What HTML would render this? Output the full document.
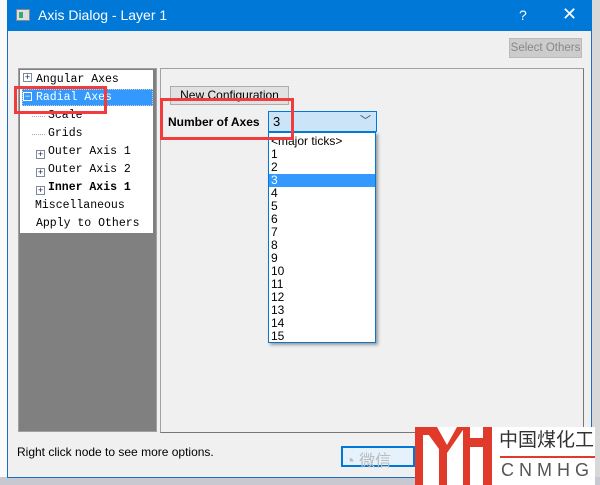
<!DOCTYPE html>
<html><head><meta charset="utf-8"><style>
*{margin:0;padding:0;box-sizing:border-box}
body{width:600px;height:485px;overflow:hidden;background:#fff;position:relative;font-family:"Liberation Sans",sans-serif;font-size:12px}
.a{position:absolute}
.mono{font-family:"Liberation Mono","DejaVu Sans Mono",monospace;font-size:11.5px;white-space:nowrap}
.lst div{height:13px;line-height:13px;padding-left:2px;font-size:12px}
</style></head><body>
<div class="a" style="left:0;top:0;width:7px;height:485px;background:#fafafa"></div>
<div class="a" style="left:591px;top:0;width:9px;height:485px;background:#d8d8d8"></div>
<div class="a" style="left:0;top:477px;width:600px;height:8px;background:#c8c8d0"></div>
<div class="a" style="left:7px;top:0;width:585px;height:478px;background:#f0f0f0;border:1px solid #1a6fc4"></div>
<div class="a" style="left:7px;top:0;width:585px;height:31px;background:#0078d7"></div>
<div class="a" style="left:16px;top:9px;width:14px;height:12px;background:#ddd;border:1px solid #888"><div style="margin:2px;width:4px;height:6px;background:#3a7"></div></div>
<div class="a" style="left:38px;top:7px;color:#fff;font-size:14px">Axis Dialog - Layer 1</div>
<div class="a" style="left:519px;top:7px;color:#fff;font-size:14px">?</div>
<div class="a" style="left:562px;top:4px;color:#fff;font-size:18px">✕</div>
<div class="a" style="left:509px;top:38px;width:73px;height:20px;background:#ccc;border:1px solid #bbb;color:#888;font-size:11.5px;text-align:center;line-height:18px;white-space:nowrap;overflow:hidden">Select Others</div>
<div class="a" style="left:18px;top:68px;width:139px;height:364px;border:1px solid #a0a0a0;background:#808080"></div>
<div class="a" style="left:20px;top:70px;width:133px;height:163px;background:#fff"></div>
<div class="a" style="left:22px;top:89px;width:131px;height:17px;background:#3399ff;border:1px dotted #ccc"></div>
<div class="a" style="left:23px;top:73px;width:9px;height:9px;border:1px solid #7a8aa0;font-size:9px;line-height:7px;text-align:center;color:#224">+</div>
<div class="a" style="left:23px;top:92px;width:9px;height:9px;border:1px solid #fff;font-size:9px;line-height:7px;text-align:center;color:#fff">−</div>
<div class="a mono" style="left:36px;top:73px">Angular Axes</div>
<div class="a mono" style="left:36px;top:91px;color:#fff">Radial Axes</div>
<div class="a mono" style="left:48px;top:109px">Scale</div>
<div class="a mono" style="left:48px;top:127px">Grids</div>
<div class="a mono" style="left:48px;top:145px">Outer Axis 1</div>
<div class="a mono" style="left:48px;top:163px">Outer Axis 2</div>
<div class="a mono" style="left:48px;top:181px;font-weight:bold">Inner Axis 1</div>
<div class="a mono" style="left:35px;top:199px">Miscellaneous</div>
<div class="a mono" style="left:36px;top:217px">Apply to Others</div>
<div class="a" style="left:36px;top:150px;width:9px;height:9px;border:1px solid #7a8aa0;background:#fff;font-size:9px;line-height:7px;text-align:center;color:#224">+</div>
<div class="a" style="left:36px;top:168px;width:9px;height:9px;border:1px solid #7a8aa0;background:#fff;font-size:9px;line-height:7px;text-align:center;color:#224">+</div>
<div class="a" style="left:36px;top:186px;width:9px;height:9px;border:1px solid #7a8aa0;background:#fff;font-size:9px;line-height:7px;text-align:center;color:#224">+</div>
<div class="a" style="left:32px;top:116px;width:13px;border-top:1px dotted #aaa"></div>
<div class="a" style="left:32px;top:134px;width:13px;border-top:1px dotted #aaa"></div>
<div class="a" style="left:160px;top:68px;width:424px;height:365px;border:1px solid #a0a0a0;border-right-color:#777;border-bottom-color:#777"></div>
<div class="a" style="left:170px;top:86px;width:119px;height:19px;background:#e1e1e1;border:1px solid #adadad;text-align:center;line-height:17px">New Configuration</div>
<div class="a" style="left:168px;top:115px;font-weight:bold;font-size:12px">Number of Axes</div>
<div class="a" style="left:268px;top:111px;width:109px;height:21px;background:#cce4f7;border:1px solid #0078d7;padding-left:4px;line-height:19px;font-size:13px">3<span style="position:absolute;right:5px;top:0;font-size:11px;color:#444">﹀</span></div>
<div class="a lst" style="left:268px;top:132px;width:108px;height:211px;background:#fff;border:1px solid #0078d7;box-shadow:2px 2px 3px #999;padding-top:2px">
<div>&lt;major ticks&gt;</div><div>1</div><div>2</div><div style="background:#3399ff;color:#fff">3</div><div>4</div><div>5</div><div>6</div><div>7</div><div>8</div><div>9</div><div>10</div><div>11</div><div>12</div><div>13</div><div>14</div><div>15</div>
</div>
<div class="a" style="left:14px;top:86px;width:93px;height:28px;border:3px solid #f03c3c"></div>
<div class="a" style="left:160px;top:98px;width:134px;height:42px;border:3px solid #f03c3c"></div>
<div class="a" style="left:17px;top:445px;font-size:12px">Right click node to see more options.</div>
<div class="a" style="left:341px;top:446px;width:74px;height:21px;border:2px solid #0078d7;background:#e5f1fb"></div>
<div class="a" style="left:345px;top:447px;color:#bbb;font-size:16px">◔ 微信</div>
<div class="a" style="left:415px;top:427px;width:180px;height:58px;background:#fff"></div>
<svg class="a" style="left:415px;top:427px" width="80" height="58"><g fill="#e03a2a"><rect x="0" y="0" width="8" height="58"/><rect x="0" y="0" width="22" height="8"/><path d="M8 0h14l10 18v40h-8V22z"/><path d="M32 18l10-18h8l-18 26z"/><rect x="48" y="0" width="7" height="58"/><rect x="68" y="0" width="9" height="58"/><rect x="48" y="11" width="29" height="9"/></g></svg>
<div class="a" style="left:499px;top:428px;font-size:19px;line-height:22px;color:#333;font-family:'Noto Sans CJK SC',sans-serif;white-space:nowrap">中国煤化工</div>
<div class="a" style="left:500px;top:456px;width:95px;border-top:2px solid #e03a2a"></div>
<div class="a" style="left:501px;top:460px;font-size:18px;color:#555;letter-spacing:5px;white-space:nowrap">CNMHG</div>
</body></html>
